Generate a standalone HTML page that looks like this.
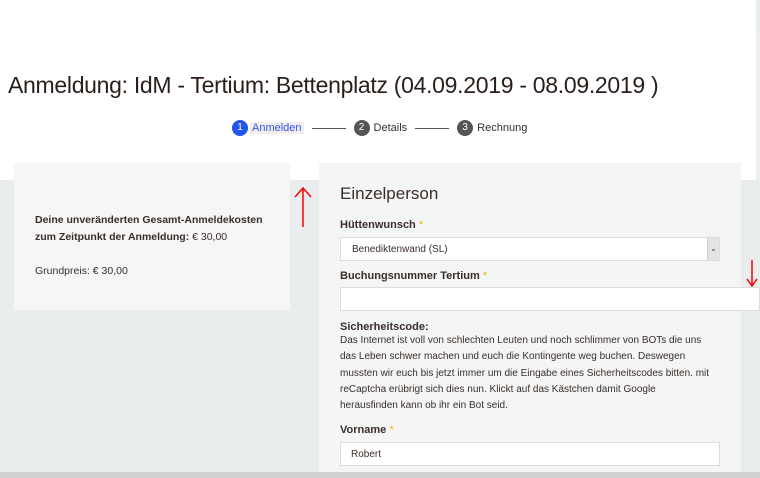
<!DOCTYPE html>
<html><head><meta charset="utf-8"><style>
*{box-sizing:border-box;margin:0;padding:0}
body{width:760px;height:478px;overflow:hidden;background:#e9eded;font-family:"Liberation Sans",sans-serif;color:#3a2e2a;position:relative}
.top{position:absolute;left:0;top:0;width:756px;height:180px;background:#fff}
.edge{position:absolute;left:756px;top:30px;width:4px;height:150px;background:#eef0f0}
h1{position:absolute;left:8px;top:72px;font-weight:normal;font-size:23px;color:#2a1e1a;letter-spacing:-0.3px;white-space:nowrap}
.steps{position:absolute;top:120px;left:232px;font-size:11px;display:flex;align-items:center}
.c{width:16px;height:16px;border-radius:50%;background:#555;color:#fff;font-size:10px;text-align:center;line-height:16px}
.ln{width:34px;height:1px;background:#555;margin:0 8px}
.lcard{position:absolute;left:14px;top:163px;width:276px;height:147px;background:#f6f6f6}
.rcard{position:absolute;left:319px;top:163px;width:422px;height:310px;background:#f4f5f5}
.bot{position:absolute;left:0;top:472px;width:760px;height:6px;background:#cfd1d1}
.lab{position:absolute;left:21px;font-size:11px;font-weight:bold;color:#3a2e2a}
.st{color:#f0b400;font-weight:normal}
.inp{position:absolute;left:21px;background:#fff;border:1px solid #dcdcdc;height:24px;font-size:10px;padding:6px 10px}
p{font-size:10.5px;line-height:17px}
</style></head><body>
<div class="top"></div><div class="edge"></div>
<h1>Anmeldung: IdM - Tertium: Bettenplatz (04.09.2019 - 08.09.2019 )</h1>
<div class="steps"><span class="c" style="background:#2255ee">1</span><span style="color:#3355ee;background:#f3eeee;padding:0 2px;margin-left:2px">Anmelden</span><span class="ln"></span><span class="c">2</span><span style="margin-left:4px">Details</span><span class="ln"></span><span class="c">3</span><span style="margin-left:4px">Rechnung</span></div>
<div class="lcard">
<p style="position:absolute;left:21px;top:49px;font-weight:bold;font-size:10.5px;width:240px">Deine unveränderten Gesamt-Anmeldekosten zum Zeitpunkt der Anmeldung: <span style="font-weight:normal">€ 30,00</span></p>
<p style="position:absolute;left:21px;top:100px">Grundpreis: € 30,00</p>
</div>
<svg style="position:absolute;left:292px;top:185px" width="24" height="44"><path d="M11 42V4M3 12L11 3L19 12" stroke="red" stroke-width="1.5" fill="none"/></svg>
<div class="rcard">
<div style="position:absolute;left:21px;top:21px;font-size:17px">Einzelperson</div>
<div class="lab" style="top:56px">Hüttenwunsch <span class="st">*</span></div>
<div class="inp" style="top:74px;width:380px;padding-left:11px">Benediktenwand (SL)<span style="position:absolute;right:0;top:0;width:12px;height:22px;background:#e4e4e4;border-left:1px solid #ccc;font-size:8px;text-align:center;line-height:22px">⌄</span></div>
<div class="lab" style="top:107px">Buchungsnummer Tertium <span class="st">*</span></div>
<div class="inp" style="top:124px;width:420px;height:24px"></div>
<div class="lab" style="top:158px">Sicherheitscode:</div>
<p style="position:absolute;left:21px;top:170px;font-size:10px;line-height:16.3px;white-space:nowrap">Das Internet ist voll von schlechten Leuten und noch schlimmer von BOTs die uns<br>das Leben schwer machen und euch die Kontingente weg buchen. Deswegen<br>mussten wir euch bis jetzt immer um die Eingabe eines Sicherheitscodes bitten. mit<br>reCaptcha erübrigt sich dies nun. Klickt auf das Kästchen damit Google<br>herausfinden kann ob ihr ein Bot seid.</p>
<div class="lab" style="top:261px">Vorname <span class="st">*</span></div>
<div class="inp" style="top:279px;width:380px">Robert</div>
</div>
<svg style="position:absolute;left:744px;top:258px" width="16" height="30"><path d="M8 2V27M3 21L8 28L13 21" stroke="red" stroke-width="1.5" fill="none"/></svg>
<div class="bot"></div>
</body></html>
